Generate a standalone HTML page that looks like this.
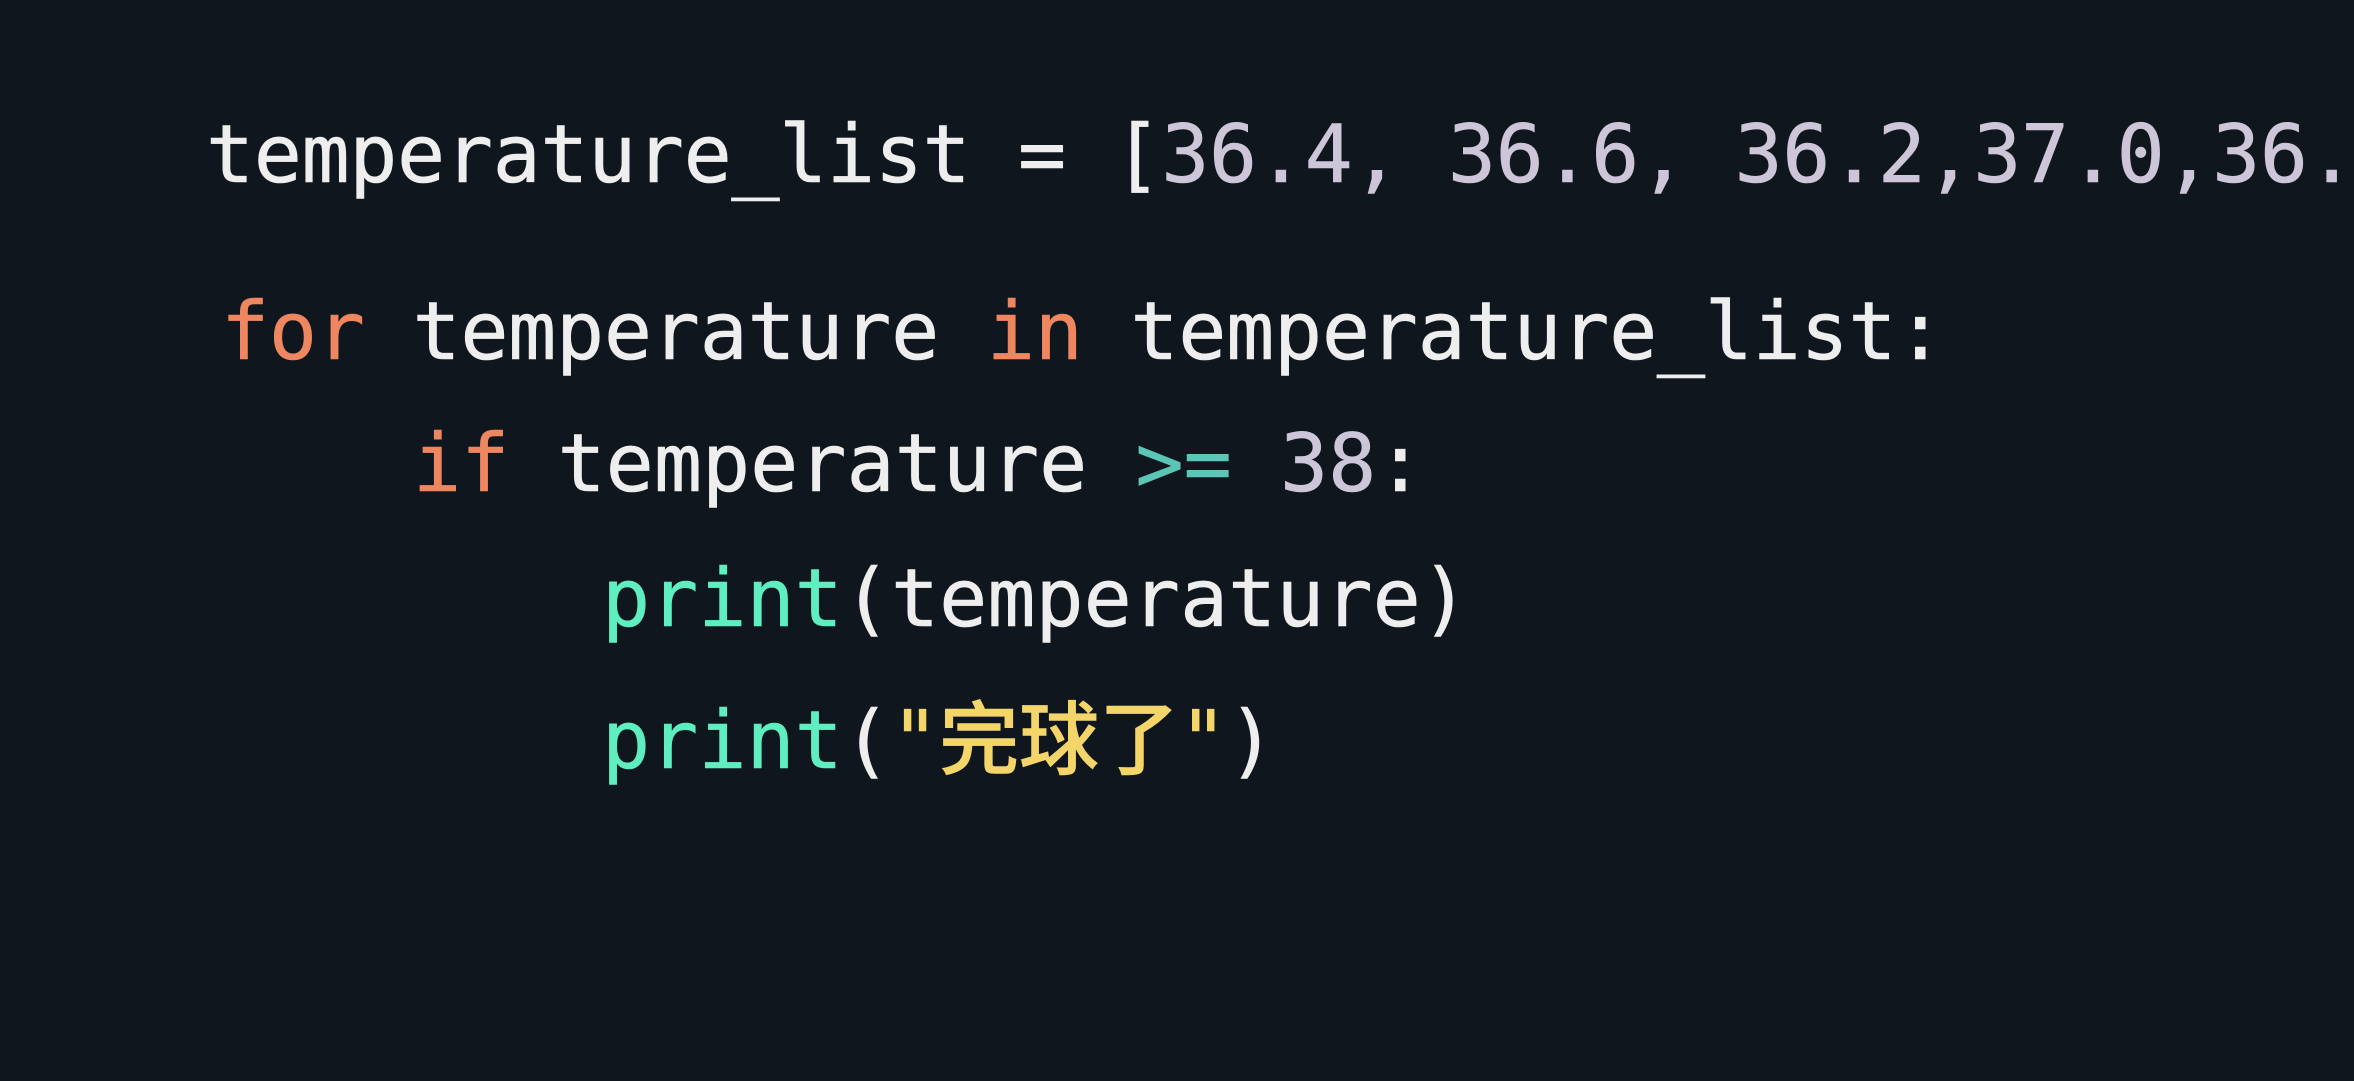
<!DOCTYPE html>
<html><head><meta charset="utf-8"><style>
html,body{margin:0;padding:0;}
body{width:2354px;height:1081px;background:#10161d;overflow:hidden;position:relative;
font-family:"DejaVu Sans Mono","Liberation Mono","Noto Sans CJK SC",monospace;font-size:80px;color:#eeeeee;}
.l{position:absolute;white-space:pre;line-height:80px;-webkit-text-stroke:0.6px currentColor;}
.k{color:#ee8660}.n{color:#cdc6d8}.o{color:#5cc6b6}.p{color:#5eeec0}.s{color:#f3d56a}
.cj{font-family:"Noto Sans CJK SC",sans-serif;font-weight:500;}
</style></head><body>
<div class="l" style="left:206px;top:115px;letter-spacing:-0.4px">temperature_list = [<span class="n">36.4, 36.6, 36.2,37.0,36.4]</span></div>
<div class="l" style="left:221px;top:292px;letter-spacing:-0.3px"><span class="k">for</span> temperature <span class="k">in</span> temperature_list:</div>
<div class="l" style="left:413px;top:424px"><span class="k">if</span> temperature <span class="o">&gt;=</span> <span class="n">38</span>:</div>
<div class="l" style="left:602px;top:559px"><span class="p">print</span>(temperature)</div>
<div class="l" style="left:602px;top:694px"><span class="p">print</span>(<span class="s">"<span class="cj">完球了</span>"</span>)</div>
</body></html>
